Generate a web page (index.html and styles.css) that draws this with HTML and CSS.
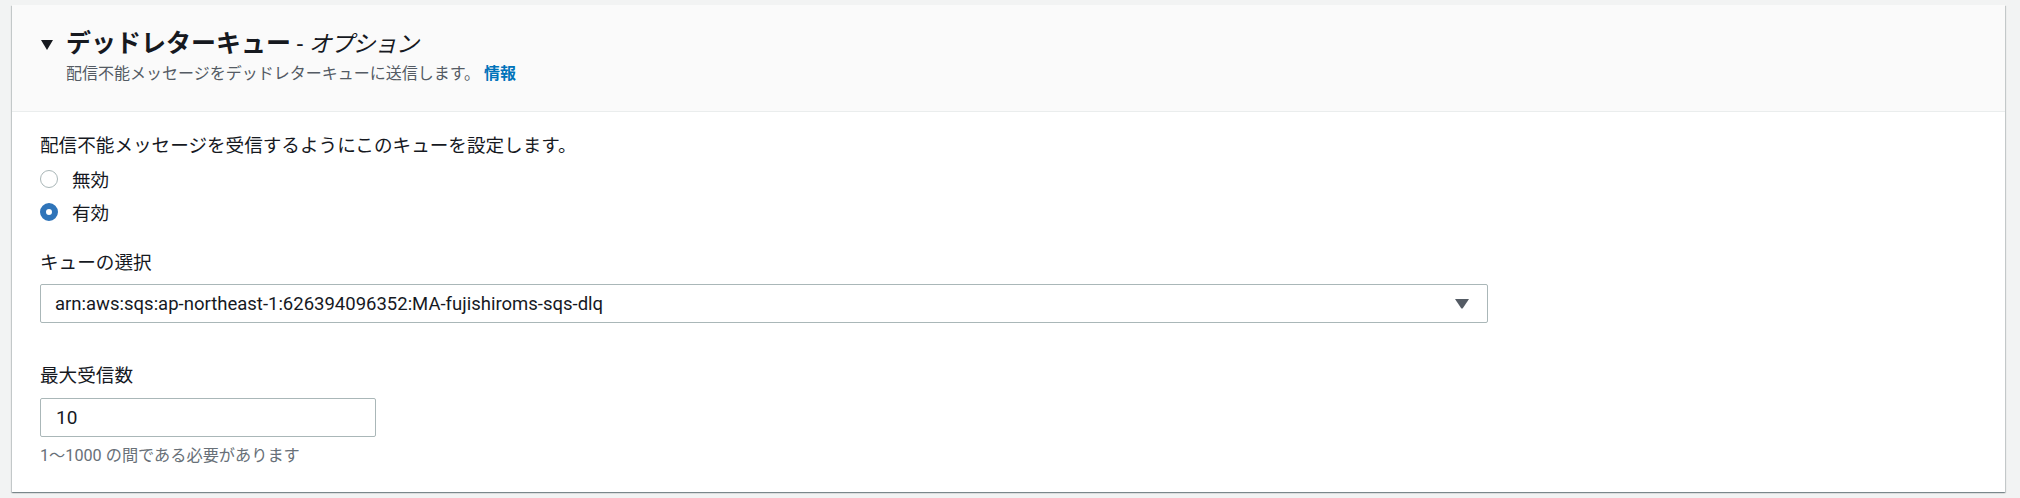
FILE: index.html
```html
<!DOCTYPE html>
<html lang="ja">
<head>
<meta charset="utf-8">
<title>デッドレターキュー</title>
<link rel="stylesheet" href="styles.css">
</head>
<body>
<div class="page">
  <section class="card">
    <header class="card-header">
      <div class="title-row">
        <svg class="caret" width="12" height="10" viewBox="0 0 12 10"><path d="M0 0H12L6 10Z" fill="#16191f"/></svg>
        <h2 class="title"><span class="title-main">デッドレターキュー</span><span class="title-sep"> - </span><span class="title-opt">オプション</span></h2>
      </div>
      <p class="subtitle">配信不能メッセージをデッドレターキューに送信します。 <a class="info" href="#">情報</a></p>
    </header>
    <div class="card-body">
      <p class="desc">配信不能メッセージを受信するようにこのキューを設定します。</p>
      <div class="radios">
        <label class="radio"><span class="radio-dot"></span><span>無効</span></label>
        <label class="radio"><span class="radio-dot checked"></span><span>有効</span></label>
      </div>
      <div class="field field-queue">
        <div class="field-label">キューの選択</div>
        <div class="select">
          <span class="select-value">arn:aws:sqs:ap-northeast-1:626394096352:MA-fujishiroms-sqs-dlq</span>
          <svg class="select-arrow" width="14" height="10" viewBox="0 0 14 10"><path d="M0 0H14L7.8 9.2Q7 10 6.2 9.2Z" fill="#545b64"/></svg>
        </div>
      </div>
      <div class="field field-max">
        <div class="field-label">最大受信数</div>
        <div class="input">10</div>
        <div class="hint">1〜1000 の間である必要があります</div>
      </div>
    </div>
  </section>
</div>
</body>
</html>
```

FILE: styles.css
```css
* { box-sizing: border-box; }
html, body { margin: 0; padding: 0; }
body {
  background: #f2f3f3;
  font-family: Roboto, "Noto Sans CJK JP", sans-serif;
  color: #16191f;
}
.page {
  padding: 5px 15px 6px 12px;
}
.card {
  background: #ffffff;
  box-shadow: 0 1px 1px 0 rgba(0, 28, 36, 0.3), 1px 1px 1px 0 rgba(0, 28, 36, 0.15), -1px 1px 1px 0 rgba(0, 28, 36, 0.15);
  display: flex;
  flex-direction: column;
}
.card-header {
  background: #fafafa;
  border-bottom: 1px solid #eaeded;
  padding: 24px 28px 27px 29px;
}
.title-row {
  display: flex;
  align-items: center;
  gap: 13px;
  height: 30px;
}
.caret { flex: none; margin-top: 1px; }
.title {
  margin: 0;
  font-size: 25px;
  line-height: 30px;
  font-weight: 700;
}
.title-sep, .title-opt {
  font-weight: 400;
  font-size: 23px;
}
.title-opt { font-style: italic; letter-spacing: -1.2px; }
.subtitle {
  margin: 5px 0 0 25px;
  font-size: 16px;
  line-height: 20px;
  color: #545b64;
}
.info {
  color: #0073bb;
  font-weight: 700;
  text-decoration: none;
}
.card-body {
  padding: 22px 28px 26px 28px;
  display: flex;
  flex-direction: column;
}
.desc {
  margin: 0;
  font-size: 18.6px;
  line-height: 24px;
}
.radios {
  margin-top: 4px;
  display: flex;
  flex-direction: column;
}
.radio {
  display: flex;
  align-items: center;
  gap: 14px;
  height: 33px;
  font-size: 18.6px;
}
.radio-dot {
  width: 18px;
  height: 18px;
  border-radius: 50%;
  border: 1.5px solid #aab7b8;
  background: #fff;
  flex: none;
}
.radio-dot.checked {
  border: 6px solid #2f74b9;
  background: #fff;
}
.field-queue { margin-top: 23px; }
.field-max { margin-top: 41px; }
.field-label {
  font-size: 18.6px;
  line-height: 24px;
}
.select {
  margin-top: 9px;
  width: 1448px;
  height: 39px;
  border: 1px solid #aab7b8;
  border-radius: 2px;
  display: flex;
  align-items: center;
  justify-content: space-between;
  padding: 0 18px 0 14px;
  font-size: 18.5px;
  background: #fff;
}
.select-arrow { flex: none; margin-top: 1px; }
.input {
  margin-top: 10px;
  width: 336px;
  height: 39px;
  border: 1px solid #aab7b8;
  border-radius: 2px;
  display: flex;
  align-items: center;
  padding: 0 15px;
  font-size: 19px;
}
.hint {
  margin-top: 9px;
  font-size: 16.2px;
  line-height: 20px;
  color: #687078;
}
```
